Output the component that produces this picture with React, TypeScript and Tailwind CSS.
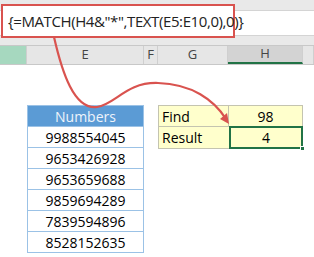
export default function App() {
  const numbers = ['9988554045', '9653426928', '9653659688', '9859694289', '7839594896', '8528152635'];
  const cols = [
    { label: '', w: 'w-[27px]', cls: 'bg-[#a6d8bf]' },
    { label: 'E', w: 'w-[117px]', cls: 'bg-[#e6e6e6]' },
    { label: 'F', w: 'w-[14px]', cls: 'bg-[#e6e6e6]' },
    { label: 'G', w: 'w-[70px]', cls: 'bg-[#e6e6e6]' },
    { label: 'H', w: 'w-[75px]', cls: 'bg-[#d3d3d3] border-b-2 border-b-[#217346]' },
    { label: '', w: 'flex-1', cls: 'bg-[#e6e6e6]' },
  ];

  return (
    <div className="relative w-[314px] h-[257px] overflow-hidden bg-white font-['Open_Sans',sans-serif] text-black">
      {/* formula bar */}
      <div className="h-[45px] bg-[#e9e9e9] pt-[10px]">
        <div className="h-[26px] bg-white border-y border-[#d4d4d4]" />
      </div>
      <div className="absolute left-[1px] top-[4px] w-[234px] h-[34px] border-2 border-[#d9534f] bg-white flex items-center pl-[5px] text-[15px] tracking-[-0.4px] text-[#222]">
        {'{=MATCH(H4&"*",TEXT(E5:E10,0),0)}'}
      </div>

      {/* column headers */}
      <div className="flex h-[20px] border-y border-[#c8c8c8] text-[13px] text-[#444]">
        {cols.map((c, i) => (
          <div key={i} className={`${c.w} ${c.cls} flex items-center justify-center border-r border-[#cfcfcf]`}>
            {c.label}
          </div>
        ))}
      </div>

      {/* sheet body */}
      <div className="flex items-start pt-[40px] pl-[27px] gap-[14px] text-[14px]">
        <div className="w-[117px] border border-[#9bc2e6]">
          <div className="h-[20px] bg-[#5b9bd5] text-[#eef4fb] flex items-center justify-center">Numbers</div>
          {numbers.map((n) => (
            <div key={n} className="h-[21px] border-t border-[#9bc2e6] flex items-center justify-center">
              {n}
            </div>
          ))}
        </div>

        <div className="w-[145px] border border-[#c4c4b0] bg-[#ffffcc]">
          <div className="flex h-[20px]">
            <div className="w-[70px] border-r border-[#c4c4b0] pl-[3px] flex items-center">Find</div>
            <div className="flex-1 flex items-center justify-center">98</div>
          </div>
          <div className="flex h-[22px] border-t border-[#c4c4b0]">
            <div className="w-[70px] pl-[3px] flex items-center">Result</div>
            <div className="relative flex-1 -mt-[1px] -mr-[1px] -mb-[1px] border-2 border-[#217346] flex items-center justify-center">
              4
              <span className="absolute -right-[4px] -bottom-[4px] w-[5px] h-[5px] bg-[#217346] border border-white" />
            </div>
          </div>
        </div>
      </div>

      {/* annotation arrow */}
      <svg className="absolute inset-0 pointer-events-none" width="314" height="257" viewBox="0 0 314 257">
        <path
          d="M54 37 C 62 72 74 110 97 107 C 116 104 126 82 158 83 C 192 84 214 100 226 119"
          fill="none"
          stroke="#d9534f"
          strokeWidth="2.2"
          strokeLinecap="round"
        />
        <path d="M229 124 L 220 119 L 227 113 Z" fill="#d9534f" />
      </svg>
    </div>
  );
}
